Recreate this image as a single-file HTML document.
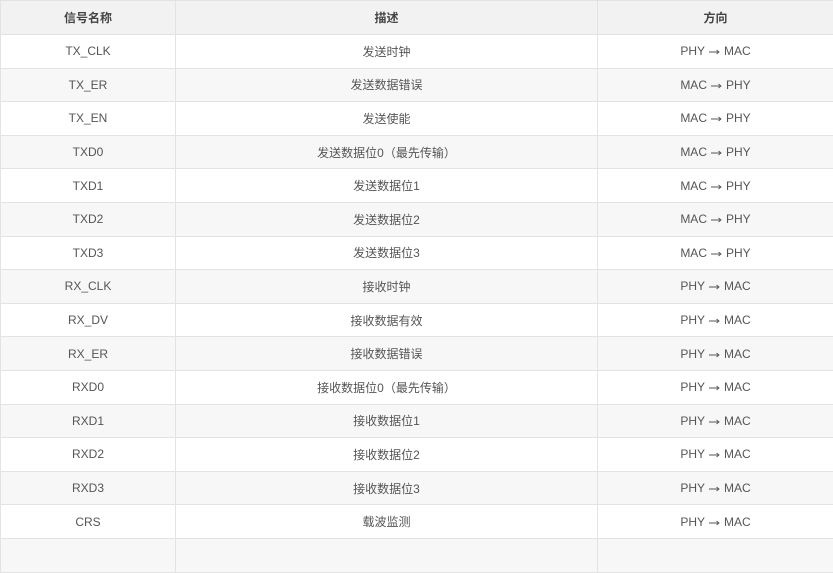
<!DOCTYPE html><html><head><style>
body{margin:0;background:#fff;width:833px;height:547px;overflow:hidden;font-family:"Liberation Sans","Noto Sans CJK SC",sans-serif;font-size:12px;color:#555}
.r{position:absolute;left:0;width:833px;display:flex;box-sizing:border-box;border-bottom:1px solid #e3e3e3}
.r div{box-sizing:border-box;border-left:1px solid #e3e3e3;display:flex;align-items:center;justify-content:center;height:100%}
.c1{width:175px}.c2{width:422px}.c3{width:236px}
.h{background:#f2f2f2;font-weight:bold;color:#444;border-top:1px solid #e3e3e3}
.g{background:#f7f7f7}
svg{margin:2px 4px 0 4px}
</style></head><body>
<div class="r h" style="top:0;height:35px"><div class="c1">信号名称</div><div class="c2">描述</div><div class="c3">方向</div></div>
<div id="b"></div>
<script>
var d=[["TX_CLK","发送时钟","PHY","MAC"],["TX_ER","发送数据错误","MAC","PHY"],["TX_EN","发送使能","MAC","PHY"],["TXD0","发送数据位0（最先传输）","MAC","PHY"],["TXD1","发送数据位1","MAC","PHY"],["TXD2","发送数据位2","MAC","PHY"],["TXD3","发送数据位3","MAC","PHY"],["RX_CLK","接收时钟","PHY","MAC"],["RX_DV","接收数据有效","PHY","MAC"],["RX_ER","接收数据错误","PHY","MAC"],["RXD0","接收数据位0（最先传输）","PHY","MAC"],["RXD1","接收数据位1","PHY","MAC"],["RXD2","接收数据位2","PHY","MAC"],["RXD3","接收数据位3","PHY","MAC"],["CRS","载波监测","PHY","MAC"],["","","",""]];
var ar='<svg width="11" height="6" viewBox="0 0 11 6"><path d="M0 3H10M7.5 1L10 3L7.5 5" stroke="#555" stroke-width="0.9" fill="none"/></svg>';
var h="";
for(var i=0;i<d.length;i++){var t=35+i*33.6;var x=d[i];
h+='<div class="r'+(i%2?' g':'')+'" style="top:'+t.toFixed(1)+'px;height:33.6px"><div class="c1">'+x[0]+'</div><div class="c2">'+x[1]+'</div><div class="c3">'+(x[2]?x[2]+ar+x[3]:'')+'</div></div>';}
document.getElementById("b").innerHTML=h;
</script>
</body></html>
